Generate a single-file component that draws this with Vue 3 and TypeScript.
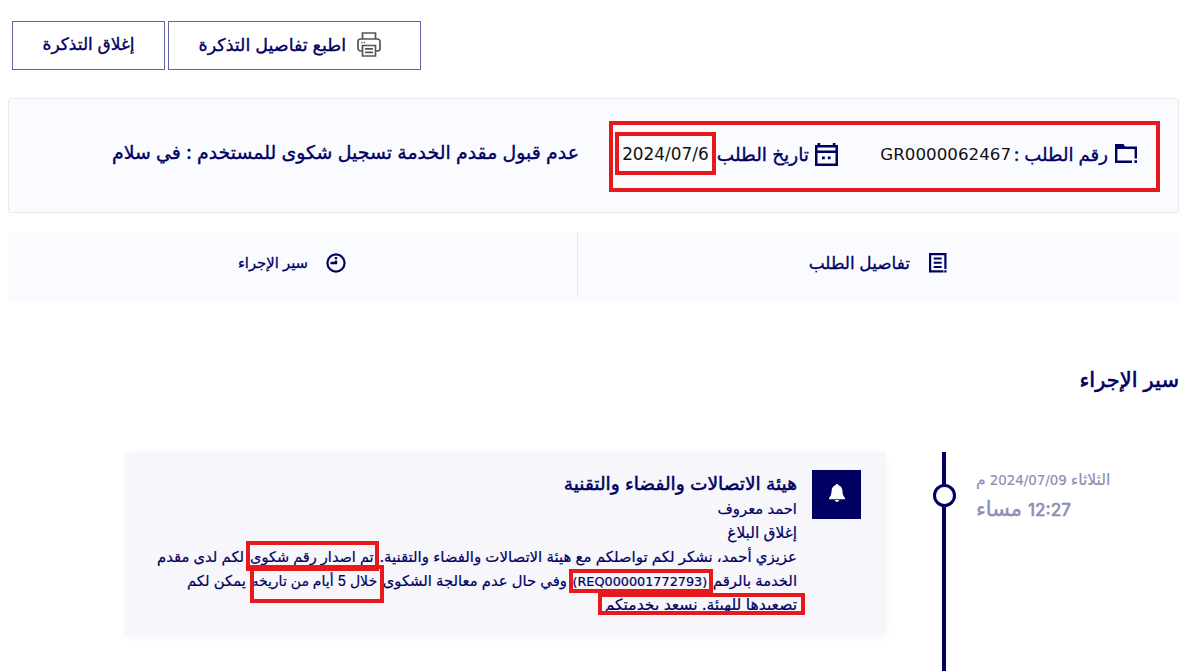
<script setup lang="ts">
interface Segment {
  text: string
  kind?: 'code' | 'term' | 'intro' | 'issued'
}

interface Mark {
  name: string
}

const messageLines: Segment[][] = [
  [
    { text: 'عزيزي أحمد، نشكر لكم تواصلكم مع هيئة الاتصالات والفضاء والتقنية.', kind: 'intro' },
    { text: 'تم اصدار رقم شكوى', kind: 'issued' },
    { text: 'لكم لدى مقدم' },
  ],
  [
    { text: 'الخدمة بالرقم' },
    { text: '(REQ000001772793)', kind: 'code' },
    { text: 'وفي حال عدم معالجة الشكوى' },
    { text: 'خلال 5 أيام من تاريخه', kind: 'term' },
    { text: 'يمكن لكم' },
  ],
  [{ text: 'تصعيدها للهيئة. نسعد بخدمتكم' }],
]

const marks: Mark[] = [
  { name: 'request' },
  { name: 'date' },
  { name: 'issued' },
  { name: 'code' },
  { name: 'term' },
  { name: 'escalate' },
]
</script>

<template>
  <main class="page" dir="rtl">
    <header class="actions">
      <button class="btn print" type="button">
        <svg class="printer" viewBox="0 0 24 25" fill="none" stroke="#555" stroke-width="1.7">
          <path d="M5.500 7V1h13v6M5.500 19H3.600A2.600 2.600 0 0 1 1 16.400V9.600A2.600 2.600 0 0 1 3.600 7h16.800A2.600 2.600 0 0 1 23 9.600v6.800A2.600 2.600 0 0 1 20.400 19h-1.900M5.500 13.500h13V24h-13zM8 16.800h8M8 20.300h8" />
          <path d="M4.300 10.500h1.200M6.700 10.500h1.200" />
        </svg>
        <span>اطبع تفاصيل التذكرة</span>
      </button>
      <button class="btn close" type="button">إغلاق التذكرة</button>
    </header>

    <section class="summary">
      <div class="field number">
        <svg class="folder" viewBox="0 0 24 22" fill="#000062">
          <path d="M1 1h8.500l1.500 2.500h12v12h-2.400V6H3.400v11.600H18V20H1zM20.400 17.300H23V20h-2.600z" />
        </svg>
        <span class="label">رقم الطلب :</span>
        <bdi class="value">GR0000062467</bdi>
      </div>
      <div class="field date">
        <svg class="calendar" viewBox="0 0 23 23" fill="#000062">
          <path fill-rule="evenodd" d="M2.500 0h2.700v2h12.600V0h2.700v2H23v21H0V2h2.500zM2.500 4.500V7.500h18v-3zm0 5.500v10.500h18V10z" />
          <path d="M7 13.500h2.800v2.800H7zM12.800 13.500h2.800v2.800h-2.800z" />
        </svg>
        <span class="label">تاريخ الطلب</span>
        <bdi class="value">2024/07/6</bdi>
      </div>
      <p class="subject">عدم قبول مقدم الخدمة تسجيل شكوى للمستخدم : في سلام</p>
    </section>

    <nav class="tabs">
      <a class="tab details">
        <svg class="doc" viewBox="0 0 18 20" fill="#000062">
          <path d="M0 0h17.500v16H15.300V2.200H2.200v15h12.300v2.300H0zM15.300 17.200h2.200v2.300h-2.200zM4.700 4.600h8v2h-8zM4.700 8.800h8v2h-8zM4.700 13h8v2h-8z" />
        </svg>
        <span>تفاصيل الطلب</span>
      </a>
      <a class="tab progress">
        <svg class="clock" viewBox="0 0 20 20" fill="none" stroke="#000062">
          <circle cx="10" cy="10" r="8.600" stroke-width="2.200" />
          <path d="M10 4v2.200M10 7.500V10H4.500" stroke-width="2.400" />
        </svg>
        <span>سير الإجراء</span>
      </a>
    </nav>

    <h2 class="heading">سير الإجراء</h2>

    <section class="timeline">
      <div class="when">
        <p class="day"><span>الثلاثاء</span><bdi>2024/07/09</bdi><span>م</span></p>
        <p class="time"><bdi>12:27</bdi><span>مساء</span></p>
      </div>
      <div class="rail"><i class="dot"></i></div>
      <article class="entry">
        <div class="badge">
          <svg class="bell" viewBox="0 0 16 18" fill="#fff">
            <path d="M8 0c.8 0 1.300.5 1.400 1.300C12 2 13.200 4 13.400 6.700c.2 4 1 5.500 2.500 7v1.500H.1v-1.500c1.500-1.500 2.300-3 2.500-7C2.800 4 4 2 6.600 1.300 6.700.5 7.200 0 8 0zM5.700 16h4.600c-.3 1.100-1.200 1.800-2.300 1.800S6 17.100 5.700 16z" />
          </svg>
        </div>
        <div class="body">
          <h3 class="org">هيئة الاتصالات والفضاء والتقنية</h3>
          <p class="line author">احمد معروف</p>
          <p class="line status">إغلاق البلاغ</p>
          <p v-for="(line, i) in messageLines" :key="i" class="line message" :class="'row-' + i">
            <template v-for="seg in line" :key="seg.text"><bdi :class="seg.kind">{{ seg.text }}</bdi>{{ ' ' }}</template>
          </p>
        </div>
      </article>
    </section>

    <div v-for="mark in marks" :key="mark.name" class="mark" :class="'mark-' + mark.name"></div>
  </main>
</template>

<style>
body { margin: 0; background: #fff; overflow: hidden; }
</style>

<style scoped>
.page {
  position: relative;
  box-sizing: border-box;
  width: 1200px;
  height: 671px;
  padding: 21px 21px 0 8px;
  overflow: hidden;
  color: #000062;
  font-family: Inter, "DejaVu Sans", sans-serif;
  white-space: nowrap;
}
p, h2, h3 { margin: 0; font-weight: 400; }
svg { flex: none; display: block; }

.actions { display: flex; justify-content: flex-end; gap: 3px; height: 49px; padding-left: 4px; }
.btn {
  display: flex;
  align-items: center;
  box-sizing: border-box;
  height: 49px;
  padding: 0 0 3px;
  border: 1px solid #6464a4;
  background: #fff;
  color: inherit;
  font-family: inherit;
  -webkit-text-stroke: .35px;
}
.print { width: 253px; padding-right: 39px; gap: 11px; font-size: 17.5px; }
.close { width: 153px; justify-content: center; font-size: 17px; }
.printer { width: 24px; height: 25px; }

.summary {
  display: flex;
  align-items: flex-start;
  box-sizing: border-box;
  height: 115px;
  margin-top: 28px;
  padding: 43px 40px 0 0;
  border: 1px solid #e9e9ec;
  border-radius: 3px;
  background: #fafbff;
}
.field { display: flex; align-items: center; height: 24px; }
.label { -webkit-text-stroke: .35px; }
.value { color: #111; font-family: "DejaVu Sans", sans-serif; }
.number { width: 300px; }
.number .label { margin-right: 6px; font-size: 18.1px; }
.number .value { margin-right: 3px; font-size: 16.7px; }
.folder { width: 24px; height: 22px; }
.date { width: 259px; }
.date .label { margin-right: 6px; font-size: 18.5px; }
.date .value { margin-right: 8px; font-size: 16.9px; }
.calendar { width: 23px; height: 23px; }
.subject { padding-top: 1px; font-size: 18.9px; line-height: 20px; -webkit-text-stroke: .35px; }

.tabs { display: flex; height: 69px; margin-top: 19px; background: #fafbff; }
.tab { display: flex; align-items: flex-start; box-sizing: border-box; height: 63px; padding-top: 21px; line-height: 20px; -webkit-text-stroke: .3px; }
.details { width: 601px; padding-right: 232px; gap: 19px; font-size: 16.9px; }
.progress { width: 570px; padding-right: 231px; gap: 18px; border-right: 1px solid #e6e7ec; font-size: 14.8px; }
.doc { width: 18px; height: 20px; }
.clock { width: 20px; height: 20px; }

.heading { height: 30px; margin-top: 64px; font-size: 21px; line-height: 30px; -webkit-text-stroke: .6px; }

.timeline { display: flex; height: 219px; margin-top: 57px; }
.when { width: 203px; margin-left: 30px; padding-top: 18px; color: #8d8db6; direction: ltr; }
.day, .time { display: flex; direction: rtl; justify-content: flex-end; align-items: baseline; }
.day { gap: 4px; font-size: 15.6px; line-height: 20px; -webkit-text-stroke: .2px; }
.day bdi { font-family: "DejaVu Sans", sans-serif; font-size: 13.4px; }
.time { gap: 6px; margin-top: 6px; font-size: 20.9px; line-height: 24px; -webkit-text-stroke: .4px; }
.time bdi { font-size: 17px; font-weight: 500; }
.rail { position: relative; width: 4px; background: #000062; }
.dot {
  position: absolute;
  top: 32px;
  left: -9px;
  box-sizing: border-box;
  width: 23px;
  height: 23px;
  border: 3px solid #000062;
  border-radius: 50%;
  background: #fff;
}
.entry {
  display: flex;
  box-sizing: border-box;
  width: 761px;
  height: 184px;
  margin-right: 56px;
  padding: 18px 25px 0 0;
  border-radius: 3px;
  background: #f6f6fb;
  box-shadow: 0 2px 8px rgba(0, 0, 50, .04);
}
.badge { display: flex; align-items: center; justify-content: center; width: 49px; height: 49px; background: #000062; }
.bell { width: 16px; height: 18px; margin-bottom: 3px; }
.body { width: 640px; margin-right: 15px; }
.org { margin-bottom: 1px; font-size: 18.6px; line-height: 26px; -webkit-text-stroke: .5px; }
.line { height: 24px; line-height: 24px; font-size: 14.8px; -webkit-text-stroke: .2px; }
.status { font-size: 15.4px; }
.message { display: flex; justify-content: space-between; align-items: baseline; }
.row-1 { width: 610px; }
.row-2 { font-size: 15.6px; }
.intro { font-size: 14.95px; }
.issued { font-size: 14.5px; }
.code { font-family: "DejaVu Sans", sans-serif; font-size: 12.8px; }
.term { font-size: 14px; }

.mark { position: absolute; box-sizing: border-box; border: 4px solid #e8191c; }
.mark-request { left: 609px; top: 121px; width: 551px; height: 71px; }
.mark-date { left: 615px; top: 132px; width: 101px; height: 43px; }
.mark-issued { left: 246px; top: 541px; width: 133px; height: 30px; }
.mark-code { left: 569px; top: 569px; width: 144px; height: 24px; }
.mark-term { left: 250px; top: 565px; width: 134px; height: 38px; }
.mark-escalate { left: 598px; top: 593px; width: 207px; height: 22px; }
</style>
